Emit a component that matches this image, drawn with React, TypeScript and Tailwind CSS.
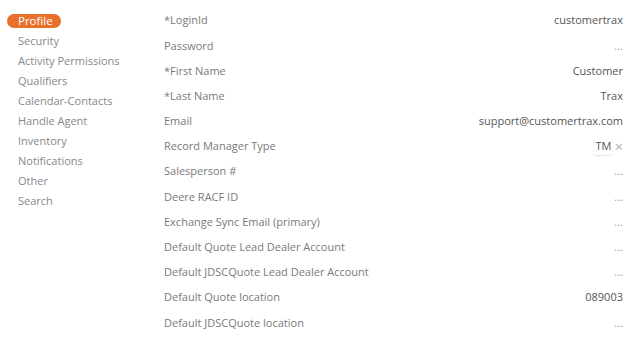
const navItems = [
  "Profile",
  "Security",
  "Activity Permissions",
  "Qualifiers",
  "Calendar-Contacts",
  "Handle Agent",
  "Inventory",
  "Notifications",
  "Other",
  "Search",
];

const fields: { label: string; value: string; tag?: boolean }[] = [
  { label: "*LoginId", value: "customertrax" },
  { label: "Password", value: "..." },
  { label: "*First Name", value: "Customer" },
  { label: "*Last Name", value: "Trax" },
  { label: "Email", value: "support@customertrax.com" },
  { label: "Record Manager Type", value: "TM", tag: true },
  { label: "Salesperson #", value: "..." },
  { label: "Deere RACF ID", value: "..." },
  { label: "Exchange Sync Email (primary)", value: "..." },
  { label: "Default Quote Lead Dealer Account", value: "..." },
  { label: "Default JDSCQuote Lead Dealer Account", value: "..." },
  { label: "Default Quote location", value: "089003" },
  { label: "Default JDSCQuote location", value: "..." },
];

export default function App() {
  return (
    <div
      className="flex w-[635px] h-[341px] bg-white text-[11px] overflow-hidden"
      style={{ fontFamily: '"Open Sans", sans-serif' }}
    >
      {/* side nav */}
      <div className="w-[164px] shrink-0 pl-[7px] pt-[11px]">
        {navItems.map((item, i) => (
          <div key={item} className="h-[20px] flex items-center">
            {i === 0 ? (
              <span className="bg-[#e8702a] text-white rounded-full px-[11px] h-[14px] leading-[14px] w-[54px] text-[11.5px]">
                {item}
              </span>
            ) : (
              <span className="px-[11px] text-[#888888]">{item}</span>
            )}
          </div>
        ))}
      </div>

      {/* profile fields */}
      <div className="flex-1 pt-[8px] pr-[12px]">
        {fields.map((f) => (
          <div key={f.label} className="h-[25.2px] flex items-center justify-between">
            <span className="text-[#7a7a7a]">{f.label}</span>
            {f.tag ? (
              <span className="flex items-center gap-[2px]">
                <span className="text-[#555555] px-[1px] rounded-[3px] shadow-[0_1px_2px_rgba(0,0,0,0.12)]">
                  {f.value}
                </span>
                <span className="text-[#b0b0b0] text-[15px] leading-none">×</span>
              </span>
            ) : (
              <span className={f.value === "..." ? "text-[#999999]" : "text-[#555555]"}>
                {f.value}
              </span>
            )}
          </div>
        ))}
      </div>
    </div>
  );
}
